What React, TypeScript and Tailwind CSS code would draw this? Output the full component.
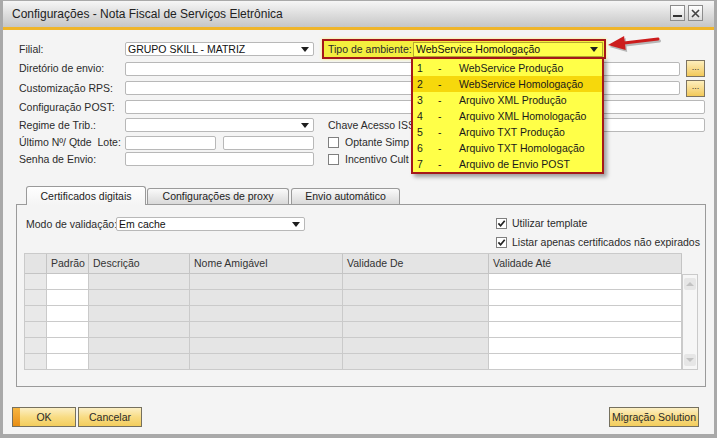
import type { ReactNode } from "react";

const envOptions = [
  "WebService Produção",
  "WebService Homologação",
  "Arquivo XML Produção",
  "Arquivo XML Homologação",
  "Arquivo TXT Produção",
  "Arquivo TXT Homologação",
  "Arquivo de Envio POST"
];

const gridCols = [
  { title: "", w: "w-[22px]", bg: "bg-[#e9e9e9]" },
  { title: "Padrão", w: "w-[42px]", bg: "bg-white" },
  { title: "Descrição", w: "w-[101px]", bg: "bg-[#e5e5e5]" },
  { title: "Nome Amigável", w: "w-[153px]", bg: "bg-[#e5e5e5]" },
  { title: "Validade De", w: "w-[146px]", bg: "bg-[#e5e5e5]" },
  { title: "Validade Até", w: "w-[193px]", bg: "bg-white" }
];

function DropArrow() {
  return (
    <span className="ml-auto mr-[4px] h-0 w-0 border-x-[4px] border-t-[5px] border-x-transparent border-t-[#1e1e1e]" />
  );
}

function Field({ className = "", children }: { className?: string; children?: ReactNode }) {
  return (
    <div
      className={`flex h-[14px] shrink-0 items-center rounded-[2px] border border-[#b8b8b8] bg-white ${className}`}
    >
      {children}
    </div>
  );
}

function Select({ className = "", value }: { className?: string; value?: string }) {
  return (
    <Field className={className}>
      <span className="pl-[2px] text-[#111]">{value}</span>
      <DropArrow />
    </Field>
  );
}

function CheckBox({ checked }: { checked?: boolean }) {
  return (
    <span className="flex h-[11px] w-[11px] shrink-0 items-center justify-center border border-[#7f7f7f] bg-white">
      {checked && (
        <svg width="9" height="9" viewBox="0 0 9 9">
          <path d="M1.4 4.4 L3.6 6.8 L7.7 1.7" fill="none" stroke="#222" strokeWidth="1.7" />
        </svg>
      )}
    </span>
  );
}

function DotsButton() {
  return (
    <div className="ml-[6px] flex h-[17px] w-[19px] shrink-0 items-center justify-center border border-[#7d7462] bg-linear-to-b from-[#fdeebb] to-[#f2c958] pb-[3px] text-[9px] leading-none text-[#333]">
      ...
    </div>
  );
}

function YButton({ className = "", children }: { className?: string; children: ReactNode }) {
  return (
    <div
      className={`relative flex h-[20px] shrink-0 items-center justify-center border border-[#75705e] bg-linear-to-b from-[#fcefc4] via-[#f8dc84] to-[#f3cd5c] text-[#2a2a2a] ${className}`}
    >
      {children}
    </div>
  );
}

function Label({ children, className = "w-[106px]" }: { children: ReactNode; className?: string }) {
  return <span className={`shrink-0 whitespace-pre text-[#2b2b2b] ${className}`}>{children}</span>;
}

export default function App() {
  return (
    <div className="relative h-[438px] w-[717px] overflow-hidden border-x-[3px] border-t border-b-[4px] border-[#a9a9a9] bg-[#f4f4f4] font-['Liberation_Sans',Arial,sans-serif] text-[10.5px] leading-none">
      {/* title bar */}
      <div className="flex h-[29px] items-center border-b-[3px] border-[#efb52a] bg-linear-to-b from-[#f6f6f6] to-[#c6c6c6] pl-[9px] pr-[11px]">
        <span className="text-[12px] text-[#222]">Configurações - Nota Fiscal de Serviços Eletrônica</span>
        <div className="ml-auto flex gap-[3px] pb-[2px]">
          <div className="flex h-[16px] w-[15px] items-end justify-center border border-[#8c8c8c] bg-linear-to-b from-white to-[#dcdcdc] pb-[3px]">
            <span className="h-[2px] w-[9px] bg-[#333]" />
          </div>
          <div className="flex h-[16px] w-[15px] items-center justify-center border border-[#8c8c8c] bg-linear-to-b from-white to-[#dcdcdc]">
            <svg width="9" height="9" viewBox="0 0 9 9">
              <path d="M1 1 L8 8 M8 1 L1 8" stroke="#444" strokeWidth="1.6" />
            </svg>
          </div>
        </div>
      </div>

      {/* header form */}
      <div className="flex flex-col pl-[16px] pt-[9px]">
        <div className="flex h-[20px] items-center">
          <Label>Filial:</Label>
          <Select className="w-[189px]" value="GRUPO SKILL - MATRIZ" />
          <div className="ml-[8px] flex h-[20px] w-[284px] items-center border-2 border-[#a51818] bg-[#f3ef3e] pl-[4px] pr-[1px] shadow-[0_0_3px_#f8f070]">
            <Label className="w-[85px]">Tipo de ambiente:</Label>
            <div className="flex h-[15px] flex-1 items-center border border-[#b7a830] bg-[#ffff4c]">
              <span className="pl-[2px] text-[#111]">WebService Homologação</span>
              <DropArrow />
            </div>
          </div>
        </div>
        <div className="flex h-[19px] items-center">
          <Label>Diretório de envio:</Label>
          <Field className="w-[555px]" />
          <DotsButton />
        </div>
        <div className="flex h-[20px] items-center">
          <Label>Customização RPS:</Label>
          <Field className="w-[555px]" />
          <DotsButton />
        </div>
        <div className="flex h-[18px] items-center">
          <Label>Configuração POST:</Label>
          <Field className="w-[580px]" />
        </div>
        <div className="flex h-[18px] items-center">
          <Label>Regime de Trib.:</Label>
          <Select className="w-[189px]" />
          <Label className="ml-[14px] w-[83px] overflow-hidden">Chave Acesso ISS</Label>
          <Field className="ml-[2px] w-[292px]" />
        </div>
        <div className="flex h-[17px] items-center">
          <Label>Último Nº/ Qtde  Lote:</Label>
          <Field className="w-[91px]" />
          <Field className="ml-[7px] w-[91px]" />
          <div className="ml-[14px] flex items-center gap-[6px]">
            <CheckBox />
            <span className="w-[64px] overflow-hidden whitespace-nowrap text-[#2b2b2b]">Optante Simples Nacional</span>
          </div>
        </div>
        <div className="flex h-[16px] items-center">
          <Label>Senha de Envio:</Label>
          <Field className="w-[189px]" />
          <div className="ml-[14px] flex items-center gap-[6px]">
            <CheckBox />
            <span className="w-[64px] overflow-hidden whitespace-nowrap text-[#2b2b2b]">Incentivo Cultural</span>
          </div>
        </div>
      </div>

      {/* tabs */}
      <div className="ml-[13px] mt-[19px] w-[690px]">
        <div className="flex items-end pl-[10px]">
          <div className="relative z-10 -mb-px flex h-[19px] w-[120px] items-center justify-center rounded-t-[3px] border border-b-0 border-[#9a9a9a] bg-linear-to-b from-white to-[#f4f4f4] text-[#222]">
            Certificados digitais
          </div>
          <div className="ml-[1px] flex h-[16px] w-[142px] items-center justify-center rounded-t-[3px] border border-b-0 border-[#9a9a9a] bg-linear-to-b from-[#fafafa] to-[#d9d9d9] text-[#222]">
            Configurações de proxy
          </div>
          <div className="ml-[2px] flex h-[16px] w-[109px] items-center justify-center rounded-t-[3px] border border-b-0 border-[#9a9a9a] bg-linear-to-b from-[#fafafa] to-[#d9d9d9] text-[#222]">
            Envio automático
          </div>
        </div>
        <div className="h-[183px] border border-[#9a9a9a] pt-[12px]">
          <div className="flex">
            <div className="flex h-[14px] w-[479px] items-center pl-[9px]">
              <Label className="w-[90px]">Modo de validação:</Label>
              <Select className="w-[189px]" value="Em cache" />
            </div>
            <div className="flex flex-col gap-[8px] pt-[1px]">
              <div className="flex h-[11px] items-center gap-[5px]">
                <CheckBox checked />
                <span className="text-[#2b2b2b]">Utilizar template</span>
              </div>
              <div className="flex h-[11px] items-center gap-[5px]">
                <CheckBox checked />
                <span className="text-[#2b2b2b]">Listar apenas certificados não expirados</span>
              </div>
            </div>
          </div>

          {/* grid */}
          <div className="ml-[7px] mt-[5px] flex">
            <div className="flex flex-col border-l border-t border-[#cacaca]">
              <div className="flex h-[20px]">
                {gridCols.map((c, i) => (
                  <div
                    key={i}
                    className={`${c.w} flex items-center border-b border-r border-[#c4c4c4] bg-[#e4e4e4] pl-[4px] text-[#333]`}
                  >
                    {c.title}
                  </div>
                ))}
              </div>
              {[0, 1, 2, 3, 4, 5].map((r) => (
                <div key={r} className="flex h-[16px]">
                  {gridCols.map((c, i) => (
                    <div key={i} className={`${c.w} ${c.bg} border-b border-r border-[#cacaca]`} />
                  ))}
                </div>
              ))}
            </div>
            <div className="mt-[21px] flex h-[96px] w-[16px] flex-col items-center justify-between border border-[#cacaca] bg-[#f6f6f6] py-[3px]">
              <div className="flex h-[12px] w-[12px] items-center justify-center rounded-[2px] bg-[#e6e6e6]">
                <span className="h-0 w-0 border-x-[4px] border-b-[4px] border-x-transparent border-b-[#c2c2c2]" />
              </div>
              <div className="flex h-[12px] w-[12px] items-center justify-center rounded-[2px] bg-[#e6e6e6]">
                <span className="h-0 w-0 border-x-[4px] border-t-[4px] border-x-transparent border-t-[#c2c2c2]" />
              </div>
            </div>
          </div>
        </div>
      </div>

      {/* footer buttons */}
      <div className="mt-[20px] flex pl-[9px] pr-[15px]">
        <YButton className="w-[64px] overflow-hidden">
          <span className="absolute inset-y-0 left-0 w-[7px] bg-linear-to-b from-[#f7b540] to-[#e88e10]" />
          OK
        </YButton>
        <YButton className="ml-[2px] w-[64px]">Cancelar</YButton>
        <YButton className="ml-auto w-[90px]">Migração Solution</YButton>
      </div>

      {/* open dropdown list */}
      <div className="absolute left-[408px] top-[56px] z-20 flex h-[117px] w-[193px] flex-col border-2 border-[#a51818] bg-[#ffff48] py-px shadow-[3px_3px_4px_rgba(0,0,0,0.35)]">
        {envOptions.map((opt, i) => (
          <div
            key={opt}
            className={`flex h-[16px] shrink-0 items-center pl-[4px] text-[#1a1a1a] ${i === 1 ? "bg-[#f6d80c]" : ""}`}
          >
            <span className="w-[21px]">{i + 1}</span>
            <span className="w-[21px]">-</span>
            <span>{opt}</span>
          </div>
        ))}
      </div>

      {/* red pointer arrow */}
      <svg className="absolute left-[597px] top-[29px] z-20" width="66" height="28" viewBox="0 0 66 28">
        <g transform="translate(1.5 2)" opacity="0.25">
          <path d="M24 13.1 L58 9" stroke="#000" strokeWidth="3" strokeLinecap="round" />
          <polygon points="8,15 25.7,20 24.1,6" fill="#000" />
        </g>
        <path d="M24 13.1 L58 9" stroke="#cc1c1c" strokeWidth="3" strokeLinecap="round" />
        <polygon points="8,15 25.7,20 24.1,6" fill="#cc1c1c" />
      </svg>
    </div>
  );
}
